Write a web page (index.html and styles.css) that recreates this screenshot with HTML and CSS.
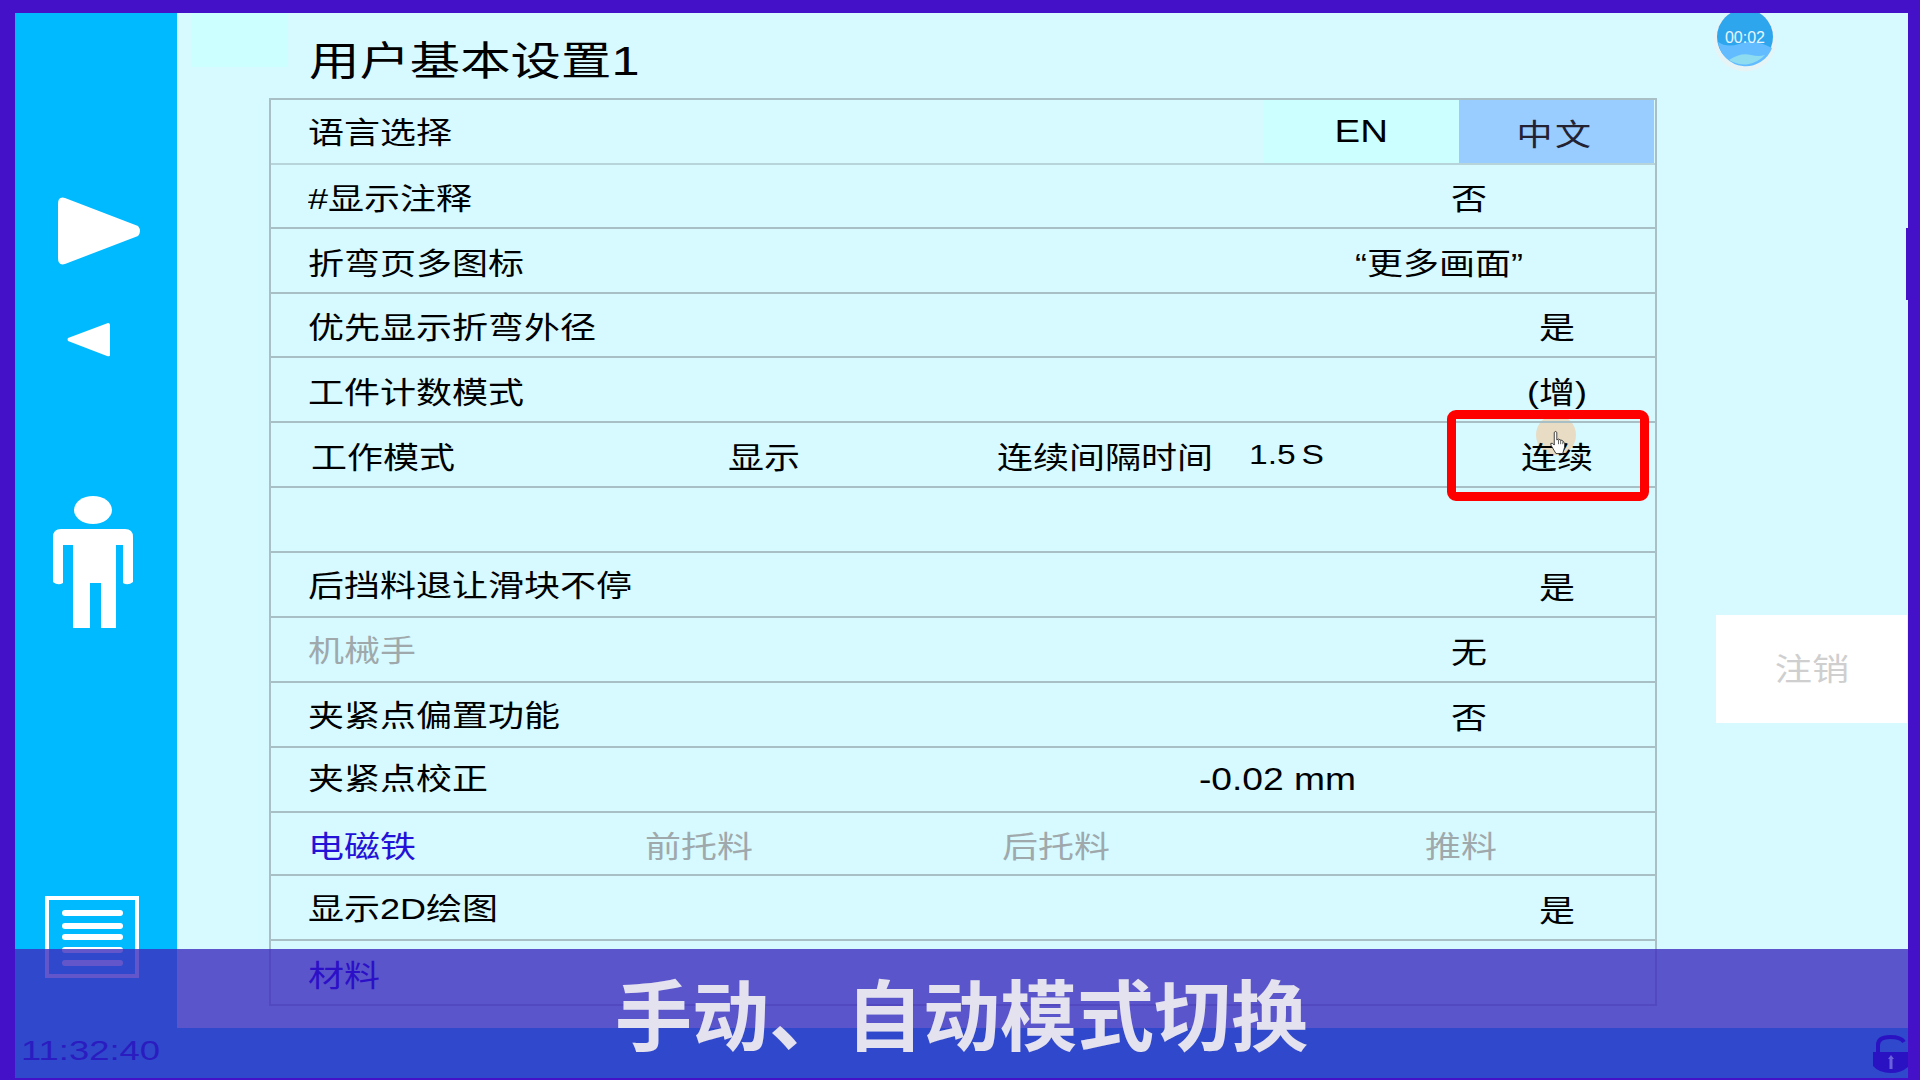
FILE: index.html
```html
<!DOCTYPE html>
<html lang="zh-CN">
  <head>
    <meta charset="UTF-8" />
    <title>用户基本设置1</title>
    <link rel="stylesheet" href="styles.css">
  </head>
  <body>
    <div class="screen">
      <aside class="sidebar">
        <svg class="icon-play" width="85" height="70" viewBox="0 0 85 70">
          <path d="M8 2 L81 30 Q85 35 81 40 L8 68 Q1 70 1 62 L1 8 Q1 0 8 2 Z" fill="#fff" />
        </svg>
        <svg class="icon-back" width="43" height="35" viewBox="0 0 43 35">
          <path d="M41 1 Q43 1 43 3 L43 33 Q43 35 40 34 L1 19 Q0 17 1 16 Z" fill="#fff" />
        </svg>
        <svg class="icon-user" width="80" height="132" viewBox="0 0 80 132">
          <ellipse cx="40" cy="14" rx="19" ry="14" fill="#fff" />
          <path d="M8 33 H72 Q80 33 80 41 V86 Q75 90 70 87 V49 H63 V132 H48 V87 H37 V132 H20 V49 H10 V87 Q5 90 0 86 V41 Q0 33 8 33 Z" fill="#fff" />
        </svg>
        <svg class="icon-menu" width="94" height="82" viewBox="0 0 94 82">
          <rect x="2" y="2" width="90" height="78" fill="none" stroke="#fff" stroke-width="4" />
          <g stroke="#fff" stroke-width="6" stroke-linecap="round">
            <line x1="20" y1="17" x2="75" y2="17" />
            <line x1="20" y1="30" x2="75" y2="30" />
            <line x1="20" y1="41" x2="75" y2="41" />
            <line x1="20" y1="54" x2="75" y2="54" />
            <line x1="20" y1="67" x2="75" y2="67" />
          </g>
        </svg>
        <div class="clock"><span class="t">11:32:40</span></div>
      </aside>

      <main class="panel">
        <div class="corner-patch"></div>
        <h1 class="title"><span class="t">用户基本设置1</span></h1>

        <div class="tap-dot"></div>

        <div class="table">
          <div class="row row-lang">
            <div class="label"><span class="t">语言选择</span></div>
            <div class="lang-btn"><span class="t">EN</span></div>
            <div class="lang-btn lang-on"><span class="t">中文</span></div>
          </div>
          <div class="row">
            <div class="label"><span class="t">#显示注释</span></div>
            <div class="val val-mid"><span class="t">否</span></div>
          </div>
          <div class="row">
            <div class="label"><span class="t">折弯页多图标</span></div>
            <div class="val val-quote"><span class="t">“更多画面”</span></div>
          </div>
          <div class="row">
            <div class="label"><span class="t">优先显示折弯外径</span></div>
            <div class="val val-end"><span class="t">是</span></div>
          </div>
          <div class="row">
            <div class="label"><span class="t">工件计数模式</span></div>
            <div class="val val-end"><span class="t">(增)</span></div>
          </div>
          <div class="row row-mode">
            <div class="label"><span class="t">工作模式</span></div>
            <div><span class="t">显示</span></div>
            <div><span class="t">连续间隔时间</span></div>
            <div class="time-val"><span class="t">1.5 S</span></div>
            <div class="val val-end"><span class="t">连续</span></div>
          </div>
          <div class="row"></div>
          <div class="row">
            <div class="label label-up"><span class="t">后挡料退让滑块不停</span></div>
            <div class="val val-end"><span class="t">是</span></div>
          </div>
          <div class="row">
            <div class="label label-up muted"><span class="t">机械手</span></div>
            <div class="val val-mid"><span class="t">无</span></div>
          </div>
          <div class="row">
            <div class="label label-up"><span class="t">夹紧点偏置功能</span></div>
            <div class="val val-mid"><span class="t">否</span></div>
          </div>
          <div class="row">
            <div class="label label-up-more"><span class="t">夹紧点校正</span></div>
            <div class="val val-num"><span class="t">-0.02 mm</span></div>
          </div>
          <div class="row row-magnet">
            <div class="label link"><span class="t">电磁铁</span></div>
            <div class="muted"><span class="t">前托料</span></div>
            <div class="muted"><span class="t">后托料</span></div>
            <div class="muted"><span class="t">推料</span></div>
          </div>
          <div class="row">
            <div class="label label-up"><span class="t">显示2D绘图</span></div>
            <div class="val val-end"><span class="t">是</span></div>
          </div>
          <div class="row row-last">
            <div class="label link on-top"><span class="t">材料</span></div>
          </div>
        </div>

        <div class="highlight"></div>
        <svg class="hand" width="17" height="25" viewBox="0 0 20 28">
          <path d="M5 2 Q7 0 8 2 V11 L10 10 L12 11 L14 11.500 L16 13 Q18 15 17 20 L15 27 H7 L1 17 Q0 14 3 15 L5 17 Z" fill="#fff" stroke="#222" stroke-width="1" />
          <path d="M10 11 V16 M12.500 11.500 V16 M15 13 V16" stroke="#222" stroke-width="0.8" />
        </svg>

        <svg class="timer" width="64" height="64" viewBox="0 0 64 64">
          <circle cx="32" cy="32" r="31.500" fill="#e6f4f6" />
          <circle cx="32" cy="29" r="28" fill="#2ea6ee" />
          <path d="M5 34 Q14 40 26 36 Q40 30 59 40 A28 28 0 0 1 5 34 Z" fill="#62bcff" />
          <path d="M16 52 Q28 44 38 47 Q46 49 52 47 A28 28 0 0 1 16 52 Z" fill="#8edcf0" />
          <text x="32" y="35" text-anchor="middle" class="timer-text">00:02</text>
        </svg>

        <div class="logout"><span class="t">注销</span></div>
      </main>

      <div class="side-notch"></div>

      <div class="caption">手动、自动模式切换</div>

      <svg class="lock" width="35" height="38" viewBox="0 0 35 38">
        <path d="M5 18 V10 Q5 2 17 2 Q28 2 31 7" fill="none" stroke="#2a12c2" stroke-width="4" />
        <path d="M0 17 H35 V32 Q28 38 18 38 Q6 38 0 31 Z" fill="#2a12c2" />
        <path d="M18 20 L21 24 H19.500 V34 H16.500 V24 H15 Z" fill="#6a62da" />
      </svg>
    </div>
  </body>
</html>
```

FILE: styles.css
```css
html,
body {
  margin: 0;
  height: 100%;
}

body {
  background: #4410c8;
  font-family: "Liberation Sans", "Noto Sans CJK SC", sans-serif;
  color: #000;
  overflow: hidden;
}

/* the source capture is stretched sideways, so the glyphs are too */
.t {
  display: inline-block;
  transform: scaleX(1.2);
  transform-origin: left center;
  white-space: nowrap;
}

.screen {
  position: absolute;
  top: 13px;
  left: 15px;
  right: 12px;
  bottom: 2px;
  display: flex;
  align-items: flex-start;
  background: #00baff;
  overflow: hidden;
}

.sidebar {
  width: 162px;
  height: 100%;
  flex-shrink: 0;
  display: flex;
  flex-direction: column;
  align-items: flex-start;
}

.sidebar svg {
  display: block;
}

.icon-play {
  margin: 183px 0 0 42px;
}

.icon-back {
  margin: 56px 0 0 52px;
}

.icon-user {
  margin: 139px 0 0 38px;
}

.icon-menu {
  margin: 268px 0 0 30px;
}

.clock {
  position: relative;
  z-index: 2;
  margin: 57px 0 0 6px;
  font-size: 28px;
  line-height: 32px;
  color: #2a1cc0;
}

.clock .t {
  transform: scaleX(1.3);
}

.panel {
  position: relative;
  width: 1731px;
  height: 1015px;
  flex-shrink: 0;
  background: #d6faff;
  overflow: hidden;
  padding-left: 92px;
  box-sizing: border-box;
}

.corner-patch {
  position: absolute;
  top: 0;
  left: 15px;
  width: 96px;
  height: 54px;
  background: #ccffff;
}

.title {
  position: relative;
  margin: 0 0 0 40px;
  height: 85px;
  display: flex;
  align-items: center;
  font-size: 40px;
  font-weight: 400;
  padding-top: 4px;
  box-sizing: border-box;
}

.title .t {
  transform: scaleX(1.26);
}

.table {
  position: relative;
  width: 1388px;
  height: 908px;
  box-sizing: border-box;
  border: 2px solid #a9bfc6;
  display: grid;
  grid-template-rows: 65px 64px 65px 64px repeat(7, 65px) 63px 65px 63px;
  font-size: 30px;
}

.row {
  display: flex;
  align-items: center;
  border-bottom: 2px solid #a9bfc6;
  padding-left: 37px;
}

.row-last {
  border-bottom: none;
}

.label {
  flex: 1;
}

.label-up {
  padding-bottom: 4px;
}

.label-up-more {
  padding-bottom: 8px;
}

.muted {
  color: #9fa8ab;
}

.link {
  color: #2412d8;
}

.on-top {
  position: relative;
  z-index: 2;
  color: #2c10c8;
}

.val {
  text-align: center;
}

.val .t {
  transform-origin: center;
}

.val-mid {
  width: 372px;
}

.val-end {
  width: 196px;
}

.val-quote {
  width: 432px;
}

.val-num {
  width: 756px;
  font-size: 31px;
}

.row-lang {
  align-items: stretch;
  border-bottom-color: #b6d4da;
}

.row-lang .label {
  align-self: center;
  padding-bottom: 4px;
}

.lang-btn {
  width: 195px;
  display: flex;
  align-items: center;
  justify-content: center;
  background: #ccffff;
  font-size: 32px;
}

.lang-btn .t {
  transform-origin: center;
}

.lang-on {
  background: #99ccff;
  margin-right: 1px;
  padding-right: 3px;
  box-sizing: border-box;
  color: #223;
  font-size: 30px;
  letter-spacing: 2px;
}

.row-mode {
  display: grid;
  grid-template-columns: 417px 269px 252px 1fr 196px;
  padding-left: 40px;
}

.row-mode .label {
  flex: none;
}

.time-val {
  font-size: 28px;
  word-spacing: -3px;
}

.row-magnet {
  display: grid;
  grid-template-columns: 337px 357px 423px 1fr;
  padding-left: 37px;
}

.row-magnet .label {
  flex: none;
}

/* callout drawn over the table in the video */
.highlight {
  position: absolute;
  left: 1270px;
  top: 397px;
  width: 202px;
  height: 91px;
  box-sizing: border-box;
  border: 9px solid #ff0000;
  border-radius: 9px;
}

.tap-dot {
  position: absolute;
  left: 1359px;
  top: 402px;
  width: 40px;
  height: 40px;
  border-radius: 50%;
  background: #e8dcc4;
}

.hand {
  position: absolute;
  left: 1373px;
  top: 417px;
}

.timer {
  position: absolute;
  left: 1536px;
  top: -5px;
}

.timer-text {
  font-family: "Liberation Sans", sans-serif;
  font-size: 16px;
  fill: #e8f6ff;
}

.logout {
  position: absolute;
  left: 1539px;
  top: 602px;
  width: 191px;
  height: 108px;
  background: #fff;
  display: flex;
  align-items: center;
  justify-content: center;
  box-sizing: border-box;
  padding-bottom: 6px;
  font-size: 31px;
  color: #cfcfcf;
}

.logout .t {
  transform-origin: center;
}

.side-notch {
  position: absolute;
  right: 0;
  top: 215px;
  width: 2px;
  height: 72px;
  background: #4410c8;
}

/* subtitle band of the video, sits over everything */
.caption {
  position: absolute;
  left: 0;
  right: 0;
  top: 936px;
  bottom: 0;
  z-index: 1;
  background: rgba(60, 44, 190, 0.8);
  color: #e4e2ee;
  font-family: "Noto Sans CJK SC", sans-serif;
  font-size: 77px;
  font-weight: 700;
  line-height: 126px;
  text-align: center;
}

.lock {
  position: absolute;
  right: 0;
  top: 1022px;
  z-index: 2;
}
```
